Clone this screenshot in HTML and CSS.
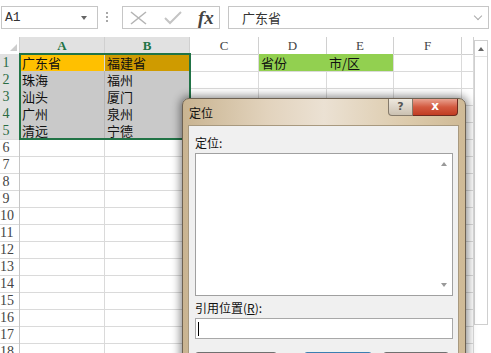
FILE: index.html
```html
<!DOCTYPE html>
<html lang="zh">
<head>
  <meta charset="UTF-8">
  <title>定位</title>
  <link rel="stylesheet" href="styles.css">
</head>
<body>
  <!-- 编辑栏 -->
  <div class="formula-bar">
    <div class="name-box"><span>A1</span><span class="caret-down"></span></div>
    <div class="grip"><i></i><i></i><i></i></div>
    <div class="fx-box">
      <svg class="ico-x" width="17" height="14" viewBox="0 0 17 14"><path d="M1 1 L16 13 M16 1 L1 13" stroke="#b4b4b4" stroke-width="1.6" fill="none"/></svg>
      <svg class="ico-ok" width="18" height="14" viewBox="0 0 18 14"><path d="M1 7 L6 12 L17 1" stroke="#c4c4c4" stroke-width="2" fill="none"/></svg>
      <span class="fx">fx</span>
    </div>
    <div class="formula-input"><span>广东省</span><span class="chevron"></span></div>
  </div>

  <!-- 工作表 -->
  <div class="sheet">
    <div class="grid">
      <div class="row head">
        <div class="corner"><span class="tri"></span></div>
        <div class="ch sel">A</div><div class="ch sel">B</div><div class="ch">C</div><div class="ch">D</div><div class="ch">E</div><div class="ch">F</div><div class="ch"></div>
      </div>
      <div class="row"><div class="rh sel">1</div><div class="c orange">广东省</div><div class="c orange-sel">福建省</div><div class="c"></div><div class="c green joined">省份</div><div class="c green">市/区</div><div class="c"></div><div class="c"></div></div>
      <div class="row"><div class="rh sel">2</div><div class="c gray">珠海</div><div class="c gray">福州</div><div class="c"></div><div class="c"></div><div class="c"></div><div class="c"></div><div class="c"></div></div>
      <div class="row"><div class="rh sel">3</div><div class="c gray">汕头</div><div class="c gray">厦门</div><div class="c"></div><div class="c"></div><div class="c"></div><div class="c"></div><div class="c"></div></div>
      <div class="row"><div class="rh sel">4</div><div class="c gray">广州</div><div class="c gray">泉州</div><div class="c"></div><div class="c"></div><div class="c"></div><div class="c"></div><div class="c"></div></div>
      <div class="row"><div class="rh sel">5</div><div class="c gray">清远</div><div class="c gray">宁德</div><div class="c"></div><div class="c"></div><div class="c"></div><div class="c"></div><div class="c"></div></div>
      <div class="row"><div class="rh">6</div><div class="c"></div><div class="c"></div><div class="c"></div><div class="c"></div><div class="c"></div><div class="c"></div><div class="c"></div></div>
      <div class="row"><div class="rh">7</div><div class="c"></div><div class="c"></div><div class="c"></div><div class="c"></div><div class="c"></div><div class="c"></div><div class="c"></div></div>
      <div class="row"><div class="rh">8</div><div class="c"></div><div class="c"></div><div class="c"></div><div class="c"></div><div class="c"></div><div class="c"></div><div class="c"></div></div>
      <div class="row"><div class="rh">9</div><div class="c"></div><div class="c"></div><div class="c"></div><div class="c"></div><div class="c"></div><div class="c"></div><div class="c"></div></div>
      <div class="row"><div class="rh">10</div><div class="c"></div><div class="c"></div><div class="c"></div><div class="c"></div><div class="c"></div><div class="c"></div><div class="c"></div></div>
      <div class="row"><div class="rh">11</div><div class="c"></div><div class="c"></div><div class="c"></div><div class="c"></div><div class="c"></div><div class="c"></div><div class="c"></div></div>
      <div class="row"><div class="rh">12</div><div class="c"></div><div class="c"></div><div class="c"></div><div class="c"></div><div class="c"></div><div class="c"></div><div class="c"></div></div>
      <div class="row"><div class="rh">13</div><div class="c"></div><div class="c"></div><div class="c"></div><div class="c"></div><div class="c"></div><div class="c"></div><div class="c"></div></div>
      <div class="row"><div class="rh">14</div><div class="c"></div><div class="c"></div><div class="c"></div><div class="c"></div><div class="c"></div><div class="c"></div><div class="c"></div></div>
      <div class="row"><div class="rh">15</div><div class="c"></div><div class="c"></div><div class="c"></div><div class="c"></div><div class="c"></div><div class="c"></div><div class="c"></div></div>
      <div class="row"><div class="rh">16</div><div class="c"></div><div class="c"></div><div class="c"></div><div class="c"></div><div class="c"></div><div class="c"></div><div class="c"></div></div>
      <div class="row"><div class="rh">17</div><div class="c"></div><div class="c"></div><div class="c"></div><div class="c"></div><div class="c"></div><div class="c"></div><div class="c"></div></div>
      <div class="row"><div class="rh">18</div><div class="c"></div><div class="c"></div><div class="c"></div><div class="c"></div><div class="c"></div><div class="c"></div><div class="c"></div></div>
      <div class="sel-range"></div>
    </div>
    <div class="vscroll"><div class="vs-up"><span class="up"></span></div></div>
  </div>

  <!-- 定位 对话框 -->
  <div class="dialog">
    <div class="dlg-title">
      <span class="dlg-name">定位</span>
      <div class="btn-help">?</div>
      <div class="btn-close">x</div>
    </div>
    <div class="dlg-body">
      <div class="lbl">定位:</div>
      <div class="listbox">
        <div class="list-items"></div>
        <div class="list-scroll"><span class="up"></span><span class="down"></span></div>
      </div>
      <div class="lbl lbl-ref">引用位置(<u>R</u>):</div>
      <div class="ref-input"><span class="text-caret"></span></div>
      <!-- 按钮只露出上边缘 -->
      <div class="dlg-buttons">
        <div class="btn"></div>
        <div class="btn btn-ok"></div>
        <div class="btn btn-cancel"></div>
      </div>
    </div>
  </div>
</body>
</html>
```

FILE: styles.css
```css
* {
  margin: 0;
  padding: 0;
  box-sizing: border-box;
}

html, body {
  width: 491px;
  height: 353px;
  overflow: hidden;
  background: #fff;
}

body {
  position: relative;
  font-family: "Noto Sans CJK SC", sans-serif;
  color: #222;
}

/* 编辑栏 */
.formula-bar {
  height: 37px;
  display: flex;
  align-items: flex-start;
  padding-top: 6px;
}

.name-box {
  width: 97px;
  height: 23px;
  margin-left: 1px;
  border: 1px solid #c6c6c6;
  display: flex;
  align-items: center;
  justify-content: space-between;
  padding: 0 10px 0 3px;
  font-family: "Liberation Mono", monospace;
  font-size: 13px;
  color: #333;
}

.caret-down {
  border-left: 3px solid transparent;
  border-right: 3px solid transparent;
  border-top: 4px solid #666;
}

.grip {
  margin: 6px 0 0 8px;
  display: flex;
  flex-direction: column;
  gap: 2px;
}

.grip i {
  width: 2px;
  height: 2px;
  background: #a8a8a8;
}

.fx-box {
  width: 98px;
  height: 23px;
  margin-left: 14px;
  border: 1px solid #c6c6c6;
  display: flex;
  align-items: center;
  padding-left: 7px;
  gap: 17px;
}

.fx {
  font-family: "Liberation Serif", serif;
  font-style: italic;
  font-weight: bold;
  font-size: 19px;
  color: #444;
  line-height: 20px;
  margin-left: -1px;
}

.formula-input {
  width: 261px;
  height: 23px;
  margin-left: 8px;
  border: 1px solid #c6c6c6;
  display: flex;
  align-items: center;
  justify-content: space-between;
  padding: 0 7px 0 13px;
  font-size: 13px;
  color: #333;
}

.chevron {
  width: 6px;
  height: 6px;
  border-right: 1.5px solid #aaa;
  border-bottom: 1.5px solid #aaa;
  transform: rotate(45deg);
  margin-top: -3px;
}

/* 工作表 */
.sheet {
  display: flex;
}

.grid {
  width: 474px;
  position: relative;
}

.row {
  display: grid;
  grid-template-columns: 20px 85px 85px 69px 68px 67px 68px 12px;
  height: 17px;
}

.row > div {
  border-right: 1px solid #dadada;
  border-bottom: 1px solid #dadada;
  white-space: nowrap;
}

.head > div {
  border-color: #d0d0d0;
}

.corner {
  display: flex;
  justify-content: flex-end;
  align-items: flex-end;
  padding: 0 2px 3px 0;
}

.tri {
  border-left: 7px solid transparent;
  border-bottom: 7px solid #cdcdcd;
}

.ch {
  text-align: center;
  font-family: "Liberation Serif", serif;
  font-size: 13px;
  line-height: 17px;
  color: #444;
}

.ch.sel {
  background: #e1e1e1;
  color: #217346;
  font-weight: bold;
}

.rh {
  text-align: center;
  padding-right: 7px;
  font-family: "Liberation Serif", serif;
  font-size: 14px;
  line-height: 17px;
  color: #444;
  border-right-color: #c6c6c6 !important;
}

.rh.sel {
  background: #e1e1e1;
  color: #2a6b44;
}

.c {
  font-size: 13px;
  line-height: 17px;
  padding-left: 2px;
  color: #111;
}

.c.orange {
  background: #ffc000;
}

.c.orange-sel {
  background: #cf9b00;
  border-color: #b98b00;
}

.c.gray {
  background: #c9c9c9;
  border-color: #b5b5b5;
}

.c.green {
  background: #92d050;
}

.c.green.joined {
  border-right-color: #92d050;
}

.sel-range {
  position: absolute;
  left: 19px;
  top: 16px;
  width: 172px;
  height: 87px;
  border: 2px solid #217346;
  pointer-events: none;
}

.vscroll {
  width: 14px;
  height: 285px;
  margin-top: 3px;
  border: 1px solid #cfcfcf;
}

.vs-up {
  height: 16px;
  border-bottom: 1px solid #e2e2e2;
  display: flex;
  justify-content: center;
  align-items: center;
}

.up {
  border-left: 3px solid transparent;
  border-right: 3px solid transparent;
  border-bottom: 4px solid #666;
}

.down {
  border-left: 3px solid transparent;
  border-right: 3px solid transparent;
  border-top: 4px solid #999;
}

/* 对话框 */
.dialog {
  position: absolute;
  left: 182px;
  top: 98px;
  width: 284px;
  height: 280px;
  padding: 0 6px 0 5px;
  border: 1px solid #6e6252;
  border-radius: 7px 7px 0 0;
  background: linear-gradient(to right, #c9b491, #e2d3bd 30%, #ebe1d3 50%, #dccaab 80%, #cfba96);
  box-shadow: 0 0 8px 2px rgba(0, 0, 0, 0.45);
}

.dlg-title {
  height: 26px;
  display: flex;
  align-items: flex-start;
}

.dlg-name {
  font-size: 12px;
  line-height: 14px;
  margin: 7px 0 0 1px;
  color: #111;
}

.btn-help {
  margin-left: auto;
  width: 25px;
  height: 17px;
  border: 1px solid #857a6b;
  border-top: none;
  border-radius: 0 0 0 4px;
  background: linear-gradient(#eee8de, #cbc1b2);
  color: #555;
  font-family: "DejaVu Sans", sans-serif;
  font-size: 11px;
  font-weight: bold;
  line-height: 16px;
  text-align: center;
}

.btn-close {
  width: 45px;
  height: 17px;
  margin-right: 1px;
  border: 1px solid #6d2a20;
  border-left: none;
  border-top: none;
  border-radius: 0 0 4px 0;
  background: linear-gradient(#e9a290, #d35a40 50%, #c13c23);
  color: #fff;
  font-family: "DejaVu Sans", sans-serif;
  font-size: 12px;
  font-weight: bold;
  line-height: 15px;
  text-align: center;
}

.dlg-body {
  height: 254px;
  background: #f0f0f0;
  border: 1px solid #a8997f;
  padding: 9px 5px 0 6px;
  font-size: 12px;
  color: #111;
}

.lbl {
  line-height: 16px;
}

.listbox {
  margin-top: 2px;
  height: 143px;
  background: #fff;
  border: 1px solid #a0a0a0;
  display: flex;
}

.list-items {
  flex: 1;
}

.list-scroll {
  width: 17px;
  display: flex;
  flex-direction: column;
  justify-content: space-between;
  align-items: center;
  padding: 8px 0 8px;
}

.list-scroll .up {
  border-bottom-color: #999;
}

.lbl-ref {
  margin-top: 4px;
}

.ref-input {
  margin-top: 2px;
  height: 21px;
  background: #fff;
  border: 1px solid #a8a8a8;
  padding: 3px 0 0 2px;
}

.text-caret {
  display: block;
  width: 1px;
  height: 14px;
  background: #000;
}

.dlg-buttons {
  margin-top: 13px;
  display: flex;
}

.btn {
  width: 82px;
  height: 23px;
  border: 1px solid #707070;
  border-radius: 3px;
  background: linear-gradient(#f2f2f2, #dcdcdc);
}

.btn-ok {
  width: 68px;
  margin-left: 27px;
  border-color: #3c7fb1;
  background: linear-gradient(#e5f1fb, #c4e0f7);
}

.btn-cancel {
  width: 66px;
  margin-left: 11px;
}
```
